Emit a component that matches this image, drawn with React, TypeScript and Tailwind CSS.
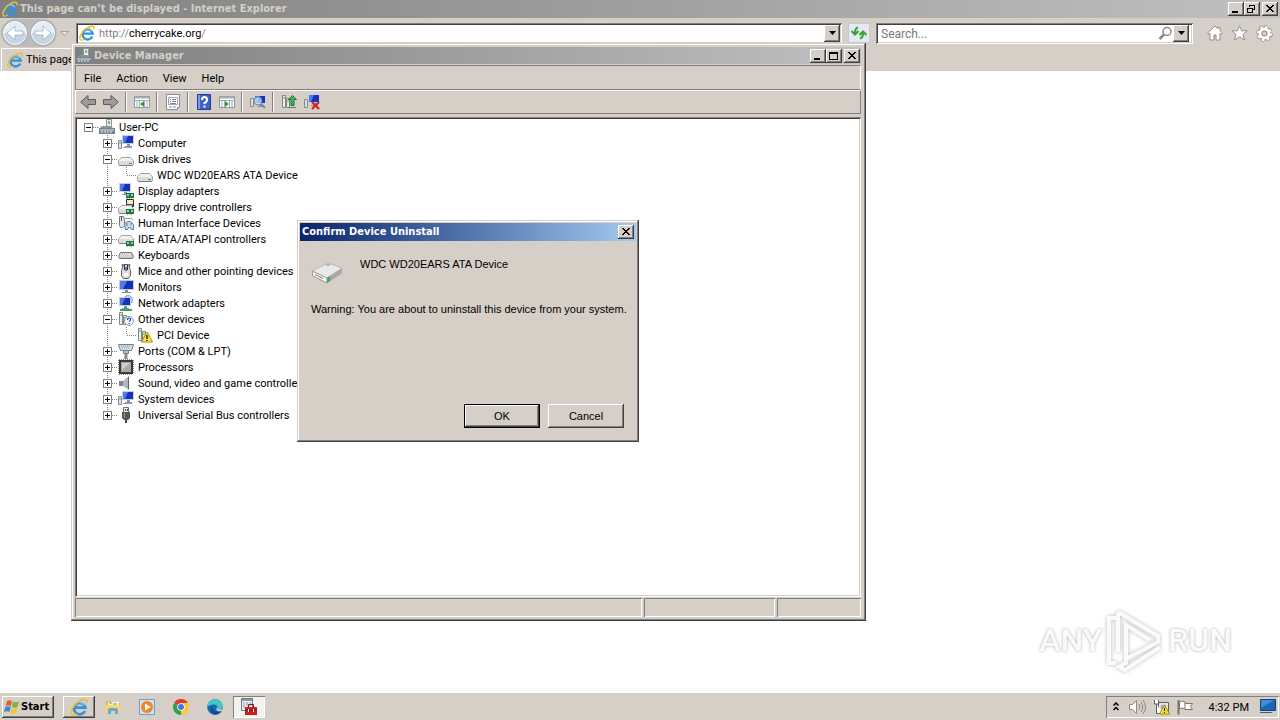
import { ReactNode, useState } from 'react';

const raised = 'bg-[#d5cfc7] shadow-[inset_-1px_-1px_#404040,inset_1px_1px_#ffffff,inset_-2px_-2px_#808080]';
const windowFrame = 'bg-[#d5cfc7] shadow-[inset_-1px_-1px_#404040,inset_1px_1px_#d5cfc7,inset_-2px_-2px_#808080,inset_2px_2px_#ffffff]';
const sunken = 'bg-white shadow-[inset_1px_1px_#808080,inset_-1px_-1px_#ffffff,inset_2px_2px_#404040,inset_-2px_-2px_#d5cfc7]';
const thinSunken = 'shadow-[inset_1px_1px_#808080,inset_-1px_-1px_#ffffff]';
const captionFont = "font-['DejaVu_Sans_Condensed','Open_Sans',sans-serif] text-[11px] font-bold whitespace-nowrap";

type IconName =
  | 'pc' | 'computer' | 'disk' | 'display' | 'floppy' | 'hid' | 'ide' | 'keyboard' | 'mouse'
  | 'monitor' | 'network' | 'other' | 'pci' | 'port' | 'cpu' | 'sound' | 'usb';

const Screen = ({ x = 3, y = 1 }: { x?: number; y?: number }) => (
  <g transform={`translate(${x} ${y})`}>
    <rect x="0" y="0" width="12" height="9" fill="#c9cfe0" />
    <rect x="1" y="1" width="10" height="7" fill="#1632b8" />
    <path d="M1 1h5l-3 7H1z" fill="#4c7be8" />
    <path d="M5 9h3v2h2v1H3v-1h2z" fill="#8b93a6" />
  </g>
);

const Drive = ({ y = 5 }: { y?: number }) => (
  <g transform={`translate(0 ${y})`}>
    <path d="M3.500.500h9l3 3.500v3.500l-1 1H1.500l-1-1V4z" fill="#dcdcdc" stroke="#a2a2a2" />
    <path d="M3.500 1h9l2.500 3H1z" fill="#f2f2f2" />
    <path d="M1 8.500h14" stroke="#7d7d7d" />
    <path d="M11 6.500h3" stroke="#4d8a55" />
  </g>
);

const Card = ({ x = 8, y = 10 }: { x?: number; y?: number }) => (
  <g transform={`translate(${x} ${y})`}>
    <rect width="8" height="5" fill="#1c7a4c" />
    <path d="M1 1h2v2H1zM5 1h2v2H5z" fill="#8fd0a5" />
    <path d="M1 5.500h6" stroke="#c8a83e" strokeDasharray="1 1" />
  </g>
);

const Tower = () => (
  <>
    <path d="M1.500 1.500h3v12h-3z" fill="#eeeeee" stroke="#858585" />
    <path d="M5.500 4.500h3v9h-3z" fill="#dfeadf" stroke="#858585" />
    <path d="M2 4h2M6 7h2" stroke="#4cae55" />
  </>
);

const drawings: Record<IconName, ReactNode> = {
  pc: (
    <>
      <path d="M7.500.500h5v8h-5z" fill="#e4eae6" stroke="#8d9a95" />
      <path d="M9 2h2v3H9z" fill="#7cb68c" />
      <path d="M3 7h8l3 2H1z" fill="#8a9198" />
      <path d="M0 9h16v6H0z" fill="#77838f" />
      <path d="M1 10h14v2H1z" fill="#a9b3bc" />
      <path d="M2 13h12" stroke="#e8ecef" strokeDasharray="2 1" />
    </>
  ),
  computer: (
    <>
      <Screen x={4} y={0} />
      <path d="M.500 5.500h3v8h-3z" fill="#e6e6ef" stroke="#858a9a" />
      <path d="M1 8h2" stroke="#48b054" />
      <path d="M5 12h9v1H5z" fill="#9a9fab" />
    </>
  ),
  disk: <Drive y={6} />,
  display: (
    <>
      <Screen x={1} y={0} />
      <Card />
    </>
  ),
  floppy: (
    <>
      <path d="M8.500.500h7v7h-7z" fill="#4a4d52" stroke="#2f3135" />
      <path d="M9 1h6v4H9z" fill="#f3ecc2" />
      <path d="M10 6h4v2h-4z" fill="#c8c8c8" />
      <Drive y={6} />
      <Card />
    </>
  ),
  hid: (
    <>
      <path d="M1.500 1.500h4l1 3v6l-2 2h-2l-1-2z" fill="#e7e7e7" stroke="#777777" />
      <path d="M3.500 2v4" stroke="#4d4d4d" />
      <path d="M6 3.500h7l2 1" stroke="#979797" fill="none" />
      <path d="M6.500 8.500l3-2h3l3 3v5h-2l-1-2h-2l-1 2h-2z" fill="#c9dceb" stroke="#607c92" />
      <path d="M9 8v3M12 9h2" stroke="#3b76a5" />
    </>
  ),
  ide: (
    <>
      <Drive y={4} />
      <Card />
    </>
  ),
  keyboard: (
    <>
      <path d="M2.500 5.500h11l2 4-1 2h-13l-1-2z" fill="#c9c9c9" stroke="#777777" />
      <path d="M3 7h10M2 9h12" stroke="#ffffff" strokeDasharray="1 1" />
    </>
  ),
  mouse: (
    <>
      <path d="M4 1l1 4M12 1l-1 4" stroke="#555555" />
      <path d="M5.500 1.500h5l2 6v5l-2 3h-5l-2-3v-5z" fill="#dedede" stroke="#5e5e5e" />
      <path d="M6 2h1v5H6zM9 2h1v5H9z" fill="#303030" />
      <path d="M7 4h2v4H7z" fill="#5c83ad" />
      <path d="M6 10h4v3H6z" fill="#ffffff" />
    </>
  ),
  monitor: (
    <g transform="translate(1 1)">
      <rect width="15" height="10" fill="#bcc9df" />
      <rect x="1" y="1" width="13" height="8" fill="#1531b2" />
      <path d="M1 1h7L4 9H1z" fill="#4d7ce9" />
      <path d="M6 10h3v2h3v1H3v-1h3z" fill="#888e9d" />
    </g>
  ),
  network: (
    <>
      <circle cx="10" cy="5" r="4.500" fill="#b8ddf7" stroke="#6ca3cb" />
      <Screen x={1} y={2} />
      <path d="M7 12h2v2h5v2H2v-2h5z" fill="#31a667" />
    </>
  ),
  other: (
    <>
      <Tower />
      <circle cx="11" cy="10" r="4.500" fill="#f4f8ff" stroke="#8899b4" />
      <path d="M9.500 9q0-2 1.500-2t1.500 1.500T11 10.500M11 12v1" stroke="#1c46ac" strokeWidth="1.200" fill="none" />
    </>
  ),
  pci: (
    <>
      <Tower />
      <path d="M9.500 5.500h1l5 9.500h-11z" fill="#ffe62e" stroke="#a48a16" />
      <path d="M10 8v4M10 13v1" stroke="#222222" strokeWidth="1.500" />
    </>
  ),
  port: (
    <>
      <path d="M.500 1.500h15l-2 6h-11z" fill="#d9dfe3" stroke="#77818a" />
      <path d="M3 3h10M4 5h8" stroke="#6c91ad" strokeDasharray="1 1" />
      <path d="M5.500 7.500h5v3h-5z" fill="#b6bcc2" stroke="#7b8389" />
      <path d="M8 11v5" stroke="#83898e" strokeWidth="3" />
    </>
  ),
  cpu: (
    <>
      <path d="M1 1h14v14H1z" fill="#3a3a36" />
      <path d="M1 .500h14M1 15.500h14M.500 1v14M15.500 1v14" stroke="#8c8a78" strokeDasharray="1 1" />
      <path d="M3 3h10v10H3z" fill="#a9a9a9" />
      <path d="M4 4h8l-8 7z" fill="#cfcfcf" />
    </>
  ),
  sound: (
    <>
      <path d="M1 6h5v5H1z" fill="#7c848d" />
      <path d="M5 6l6-5v14l-6-4z" fill="#aeb5bc" />
      <path d="M10.500 2v12" stroke="#58616a" />
    </>
  ),
  usb: (
    <>
      <path d="M5.500.500h5v5h-5z" fill="#ededed" stroke="#6f6f6f" />
      <path d="M7 2h1v2H7zM9 2h1v2H9z" fill="#444444" />
      <path d="M4 5h8v6l-2 2H6l-2-2z" fill="#555555" />
      <path d="M6 6h1v5H6z" fill="#9b9b9b" />
      <path d="M8 13v3" stroke="#444444" strokeWidth="2" />
    </>
  ),
};

interface TreeNode {
  label: string;
  icon: IconName;
  level: number;
  state?: 'open' | 'closed';
  last?: boolean;
}

const nodes: TreeNode[] = [
  { label: 'User-PC', icon: 'pc', level: 0, state: 'open' },
  { label: 'Computer', icon: 'computer', level: 1, state: 'closed' },
  { label: 'Disk drives', icon: 'disk', level: 1, state: 'open' },
  { label: 'WDC WD20EARS ATA Device', icon: 'disk', level: 2 },
  { label: 'Display adapters', icon: 'display', level: 1, state: 'closed' },
  { label: 'Floppy drive controllers', icon: 'floppy', level: 1, state: 'closed' },
  { label: 'Human Interface Devices', icon: 'hid', level: 1, state: 'closed' },
  { label: 'IDE ATA/ATAPI controllers', icon: 'ide', level: 1, state: 'closed' },
  { label: 'Keyboards', icon: 'keyboard', level: 1, state: 'closed' },
  { label: 'Mice and other pointing devices', icon: 'mouse', level: 1, state: 'closed' },
  { label: 'Monitors', icon: 'monitor', level: 1, state: 'closed' },
  { label: 'Network adapters', icon: 'network', level: 1, state: 'closed' },
  { label: 'Other devices', icon: 'other', level: 1, state: 'open' },
  { label: 'PCI Device', icon: 'pci', level: 2 },
  { label: 'Ports (COM & LPT)', icon: 'port', level: 1, state: 'closed' },
  { label: 'Processors', icon: 'cpu', level: 1, state: 'closed' },
  { label: 'Sound, video and game controllers', icon: 'sound', level: 1, state: 'closed' },
  { label: 'System devices', icon: 'computer', level: 1, state: 'closed' },
  { label: 'Universal Serial Bus controllers', icon: 'usb', level: 1, state: 'closed', last: true },
];

// dotted connectors and the plus/minus box in front of a row
const Branch = ({ node }: { node: TreeNode }) => {
  const x = node.level * 19 + 9.5;
  const width = (node.level + 1) * 19;
  return (
    <svg width={width} height="16" className="shrink-0" fill="none" stroke="#808080" shapeRendering="crispEdges">
      {node.level === 2 && <path d="M28.500 0V16" strokeDasharray="1 1" />}
      {node.level > 0 && <path d={`M${x} 0V${node.last || node.level === 2 ? 8 : 16}`} strokeDasharray="1 1" />}
      <path d={`M${x} 8.500H${width}`} strokeDasharray="1 1" />
      {node.state && (
        <>
          <rect x={x - 4} y="4.500" width="8" height="8" fill="#ffffff" />
          <path d={`M${x - 2.5} 8.500h5`} stroke="#000000" />
          {node.state === 'closed' && <path d={`M${x} 6v5`} stroke="#000000" />}
        </>
      )}
    </svg>
  );
};

const IeLogo = ({ size = 16 }: { size?: number }) => (
  <svg width={size} height={size} viewBox="0 0 16 16" fill="none" className="shrink-0">
    <path d="M13.300 11.500A5.100 5.100 0 1 1 13.700 8.600H4.500" stroke="#2f93dd" strokeWidth="2.400" />
    <path d="M12.800 6.200A5.200 5.200 0 0 0 4 6" stroke="#8fd3fa" strokeWidth="1.200" />
    <path d="M15 4.500C16 .500 12 .300 8 3 3.500 6 .200 11 1 14c.700 2 3.300 1 5 0" stroke="#f2bd1d" strokeWidth="1.400" />
  </svg>
);

const CaptionButton = ({ kind }: { kind: 'minimize' | 'maximize' | 'restore' | 'close' }) => (
  <button aria-label={kind} className={`flex h-[14px] w-4 shrink-0 items-center justify-center ${raised} ${kind === 'close' ? 'ml-[2px]' : ''}`}>
    <svg width="12" height="10" stroke="#000000" fill="none" shapeRendering="crispEdges">
      {kind === 'minimize' && <path d="M2 8h6" strokeWidth="2" />}
      {kind === 'maximize' && <path d="M1.500 1v7.500h8V1M1 1.500h9M1 2.500h9" />}
      {kind === 'restore' && <path d="M3.500 3V1.500h5v4H7M3 1h6M1.500 4.500h5v4h-5zM1 4h6" />}
      {kind === 'close' && <path d="M2 1l7 7M3 1l7 7M9 1L2 8M10 1L3 8" shapeRendering="auto" />}
    </svg>
  </button>
);

const DropButton = ({ label }: { label: string }) => (
  <button aria-label={label} className={`flex h-[17px] w-4 items-center justify-center ${raised}`}>
    <svg width="7" height="4"><path d="M0 0h7L3.500 4z" /></svg>
  </button>
);

const RoundArrow = ({ flip }: { flip?: boolean }) => (
  <button aria-label={flip ? 'Forward' : 'Back'}>
    <svg width="28" height="28" viewBox="0 0 28 28">
      <circle cx="14" cy="14" r="13" fill="#a9adb2" />
      <circle cx="14" cy="14" r="11.500" fill="#e3edf6" stroke="#ffffff" />
      <path d="M3 14a11 11 0 0 0 22 0z" fill="#c7d6e4" />
      <path
        d={flip ? 'M6 12h8V7l8 7-8 7v-5H6z' : 'M22 12h-8V7l-8 7 8 7v-5h8z'}
        fill="#ffffff"
        stroke="#9ab0c4"
        strokeWidth=".8"
      />
    </svg>
  </button>
);

const Browser = () => {
  const [host, setHost] = useState('cherrycake.org');
  return (
    <>
      <header className="flex h-[18px] items-center bg-linear-to-r from-[#808080] to-[#c0c0c0] pr-[2px] pl-[2px]">
        <IeLogo />
        <h1 className={`ml-[2px] flex-1 pt-px text-[#d5cfc7] ${captionFont}`}>This page can’t be displayed - Internet Explorer</h1>
        <CaptionButton kind="minimize" />
        <CaptionButton kind="restore" />
        <CaptionButton kind="close" />
      </header>
      <nav className="flex h-[30px] items-center bg-[#d5cfc7] pr-[7px] pl-px">
        <div className="mr-[3px] flex items-center rounded-full bg-[#bcbcbc]">
          <RoundArrow />
          <RoundArrow flip />
        </div>
        <svg width="9" height="5" className="mr-[7px]"><path d="M.500.500h8l-4 4z" fill="#e6e3dc" stroke="#a5a199" /></svg>
        <div className={`flex h-[21px] flex-[761] items-center pr-[2px] pl-[3px] text-[11px] ${sunken}`}>
          <IeLogo />
          <label htmlFor="address" className="ml-1 pt-[2px] text-[#808080]">http://</label>
          <input id="address" value={host} onChange={e => setHost(e.target.value)} className="field-sizing-content pt-[2px] outline-none" />
          <span className="flex-1 pt-[2px] text-[#808080]">/</span>
          <DropButton label="Address history" />
        </div>
        <button aria-label="Refresh" className="mx-[6px] flex h-5 w-[22px] items-center justify-center border border-[#c3c8da] bg-[#e6e8f2]">
          <svg width="16" height="14" viewBox="0 0 16 14" fill="none" stroke="#37a134" strokeWidth="2">
            <path d="M7 1.500Q4 2 4 7M.500 5L4 8.500 7.500 5M9 12.500Q12 12 12 7M8.500 9L12 5.500 15.500 9" />
          </svg>
        </button>
        <div className={`flex h-[21px] flex-[308] items-center pr-1 pl-[5px] ${sunken}`}>
          <input aria-label="Search" placeholder="Search..." className="min-w-0 flex-1 pt-px text-xs outline-none placeholder:text-[#777777]" />
          <svg width="15" height="15" fill="none" stroke="#8a8a8a">
            <circle cx="9" cy="5.500" r="4" strokeWidth="1.500" />
            <path d="M6 8.500L1.500 13" strokeWidth="2.500" />
          </svg>
          <DropButton label="Search providers" />
        </div>
        <div className="ml-[14px] flex gap-2">
          <button aria-label="Home">
            <svg width="16" height="16" fill="#ffffff" stroke="#92908b">
              <path d="M8 1L.700 8l1.300 1.300 1-1V15h4v-5h2v5h4V8.300l1 1L15.300 8 13 5.700V2h-2v2z" />
            </svg>
          </button>
          <button aria-label="Favorites">
            <svg width="17" height="16" fill="#ffffff" stroke="#92908b">
              <path d="M8.500.800l2.200 5h5.500l-4.300 3.700 1.600 5.500-5-3.200-5 3.200 1.600-5.500L.800 5.800h5.500z" />
            </svg>
          </button>
          <button aria-label="Tools">
            <svg width="17" height="17" viewBox="0 0 17 17" fill="none">
              <circle cx="8.500" cy="8.500" r="7" stroke="#8e8c87" strokeWidth="2.500" strokeDasharray="3.200 2.300" />
              <circle cx="8.500" cy="8.500" r="4.500" stroke="#8e8c87" strokeWidth="5" />
              <circle cx="8.500" cy="8.500" r="6.500" stroke="#ffffff" strokeWidth="2" strokeDasharray="2.400 2.700" />
              <circle cx="8.500" cy="8.500" r="4.500" stroke="#ffffff" strokeWidth="3" />
            </svg>
          </button>
        </div>
      </nav>
      <div className="flex h-[23px] bg-[#d5cfc7] pl-px">
        <button className="flex items-center gap-[3px] border-t border-l border-white pr-1 pl-[5px] text-[11px] whitespace-nowrap">
          <IeLogo />
          <span className="pt-px">This page</span>
        </button>
      </div>
      <main className="flex flex-1 items-end justify-end bg-white pr-12 pb-5">
        <Watermark />
      </main>
    </>
  );
};

const Watermark = () => (
  <div className="flex items-center gap-1 text-[32px] leading-none font-medium text-[#fafafa] [text-shadow:0_0_3px_#aaaaaa]">
    <span>ANY</span>
    <svg width="58" height="64" viewBox="0 0 58 64" fill="none" className="drop-shadow-[0_0_2px_#bbbbbb]">
      <path d="M10 10H3v45h7M12 4v40M12 4l40 24v6L20 51V17l24 15M20 51v4l-7 4 6 3 35-23" stroke="#fafafa" strokeWidth="4" />
    </svg>
    <span>RUN</span>
  </div>
);

const ToolButton = ({ label, children }: { label: string; children: ReactNode }) => (
  <button aria-label={label} className="flex h-5 w-[23px] items-center justify-center">
    <svg width="16" height="16" viewBox="0 0 16 16" fill="none">{children}</svg>
  </button>
);

const Separator = () => <span className="mx-[3px] h-5 w-[2px] border-r border-l border-r-white border-l-[#808080]" />;

const Pane = ({ right }: { right?: boolean }) => (
  <>
    <path d="M.500 2.500h15v11H.500z" fill="#ffffff" stroke="#92979b" />
    <path d="M1 3.500h14" stroke="#a6aeb6" strokeWidth="2" />
    <path d="M1 6.500h14M5.500 7v6M10.500 7v6" stroke="#a8adb1" />
    <path d={right ? 'M6 7l4 3-4 3z' : 'M10 7l-4 3 4 3z'} fill="#2b9b2f" />
    <path d="M12 8h2M12 10h2M12 12h2M2 8h2M2 10h2M2 12h2" stroke="#7bb6d4" />
  </>
);

const DeviceManager = () => (
  <section aria-label="Device Manager" className={`absolute top-[43px] left-[71px] flex h-[578px] w-[795px] flex-col py-1 pr-[5px] pl-1 ${windowFrame}`}>
    <div className="flex h-[17px] shrink-0 items-center bg-linear-to-r from-[#808080] to-[#c0c0c0] pr-px pl-px">
      <svg width="16" height="16">{drawings.pc}</svg>
      <h2 className={`ml-[2px] flex-1 pt-px text-[#d5cfc7] ${captionFont}`}>Device Manager</h2>
      <CaptionButton kind="minimize" />
      <CaptionButton kind="maximize" />
      <CaptionButton kind="close" />
    </div>
    <div className="mt-px flex h-[25px] shrink-0 items-center gap-[15px] border border-t-[#808080] border-r-white border-b-[#808080] border-l-[#808080] pt-[3px] pl-2 text-[11px]">
      {['File', 'Action', 'View', 'Help'].map(item => (
        <button key={item}>{item}</button>
      ))}
    </div>
    <div className="flex h-[24px] shrink-0 items-center border border-t-white border-r-[#808080] border-b-[#808080] border-l-white">
      <ToolButton label="Back"><path d="M8 1.500v4h7.500v5H8v4L.700 8z" fill="#9b9b9b" stroke="#5c5c5c" /></ToolButton>
      <ToolButton label="Forward"><path d="M8 1.500v4H.500v5H8v4L15.300 8z" fill="#9b9b9b" stroke="#5c5c5c" /></ToolButton>
      <Separator />
      <ToolButton label="Show console tree"><Pane /></ToolButton>
      <Separator />
      <ToolButton label="Properties">
        <path d="M1.500.500h13v13h-2v2h-11z" fill="#ffffff" stroke="#858b90" />
        <path d="M3.500 3.500h9v7h-9z" stroke="#a3abb2" />
        <path d="M5 5.500h1M7 5.500h4M5 7.500h1M7 7.500h4M5 9.500h6M4 13h3M8 13h3" stroke="#7188a0" />
      </ToolButton>
      <Separator />
      <ToolButton label="Help">
        <path d="M1.500.500h13v15h-13z" fill="#3b62c8" stroke="#1f3d93" />
        <path d="M2 1h2v14H2z" fill="#7b9ae8" />
        <path d="M6 6q0-3 2.500-3T11 5.500 8.500 9v1M8.500 11.500v2" stroke="#ffffff" strokeWidth="2" />
      </ToolButton>
      <ToolButton label="Action pane"><Pane right /></ToolButton>
      <Separator />
      <ToolButton label="Scan for hardware changes">
        <Screen x={4} y={1} />
        <path d="M.500 4.500h3v8h-3z" fill="#e0e0e0" stroke="#888888" />
        <circle cx="8" cy="7" r="4" fill="#c6e3ff" fillOpacity=".75" stroke="#6c8ba9" />
        <path d="M11 10l4 4" stroke="#7d8791" strokeWidth="2" />
      </ToolButton>
      <Separator />
      <ToolButton label="Update driver">
        <Tower />
        <path d="M7 13.500h8" stroke="#777777" />
        <path d="M11.500 1.500l4 4H13v6h-3v-6H7.500z" fill="#45b45e" stroke="#1c7438" />
      </ToolButton>
      <ToolButton label="Uninstall">
        <Screen x={4} y={0} />
        <path d="M.500 5.500h3v8h-3z" fill="#e0e0e0" stroke="#888888" />
        <path d="M8 8l7 7M15 8l-7 7" stroke="#e01b1b" strokeWidth="2" />
      </ToolButton>
    </div>
    <ul className={`mt-[3px] flex-1 overflow-hidden py-[2px] pl-1 ${sunken}`}>
      {nodes.map((node, index) => (
        <li key={index} className="flex h-4 items-center gap-px text-[11px] whitespace-nowrap">
          <Branch node={node} />
          <svg width="16" height="16" className="shrink-0">{drawings[node.icon]}</svg>
          <span className="pt-[2px] pl-[3px]">{node.label}</span>
        </li>
      ))}
    </ul>
    <div className="mt-px flex h-[19px] shrink-0 gap-[2px]">
      <span className={`flex-1 ${thinSunken}`} />
      <span className={`w-[131px] ${thinSunken}`} />
      <span className={`w-[84px] ${thinSunken}`} />
    </div>
  </section>
);

const ConfirmDialog = () => (
  <div role="dialog" aria-label="Confirm Device Uninstall" className={`absolute top-[220px] left-[297px] flex h-[222px] w-[342px] flex-col p-[3px] ${windowFrame}`}>
    <div className="flex h-[18px] shrink-0 items-center bg-linear-to-r from-[#0a246a] to-[#a6caf0] pr-[2px] pl-[2px]">
      <h2 className={`flex-1 pt-px text-white ${captionFont}`}>Confirm Device Uninstall</h2>
      <CaptionButton kind="close" />
    </div>
    <div className="flex flex-1 flex-col pr-3 pb-[11px] pl-[11px] font-['Liberation_Sans',Arial,sans-serif] text-[11px] leading-4">
      <div className="mt-[15px] flex gap-[17px]">
        <svg width="32" height="32" viewBox="0 0 32 32">
          <path d="M1 19l10 6 5 2 15-10v-3L16 24 1 16z" fill="#8d918f" />
          <path d="M1 15L17 7l14 5-15 10z" fill="#e9eae9" stroke="#b9bab9" />
          <path d="M1 15l15 7v5L2 20z" fill="#f7f7f7" stroke="#9b9c9b" />
          <path d="M16 22l15-10v5L16 27z" fill="#a7aaa8" />
          <path d="M4 18l8 4v1l-8-4z" fill="#777777" />
          <path d="M16 22v5l3-2v-5z" fill="#4fa65b" />
          <path d="M14 9l3-1 3 1-3 1z" fill="#a5a5a5" />
        </svg>
        <p>WDC WD20EARS ATA Device</p>
      </div>
      <p className="mt-[13px] flex-1 whitespace-nowrap">Warning: You are about to uninstall this device from your system.</p>
      <div className="flex justify-end gap-2">
        <button className="h-6 w-[76px] border border-black bg-[#d5cfc7] shadow-[inset_-1px_-1px_#404040,inset_1px_1px_#ffffff,inset_-2px_-2px_#808080]">OK</button>
        <button className={`h-6 w-[76px] ${raised}`}>Cancel</button>
      </div>
    </div>
  </div>
);

const taskButton = 'flex h-[22px] w-8 items-center justify-center';

const Taskbar = () => (
  <footer className="flex h-7 items-center border-t border-white bg-[#d5cfc7] pl-[2px]">
    <button className={`flex h-[22px] w-[52px] items-center gap-px pl-[2px] ${captionFont} ${raised}`}>
      <svg width="16" height="16" viewBox="0 0 16 16" className="shrink-0">
        <path d="M3 2q2-1.500 5 0L7 7Q4 5.500 1.500 7z" fill="#e8582a" />
        <path d="M9 2.500q3 1.500 6 0L13.500 8q-3 1.500-5.500 0z" fill="#7ab83a" />
        <path d="M1.300 8q3-1.500 5.500 0l-1.500 5Q3 11.500 0 13z" fill="#3b87d6" />
        <path d="M7.700 9q3 1.500 5.500 0L12 14q-3 1.500-5.500 0z" fill="#f6c32a" />
      </svg>
      <span className="pt-[2px]">Start</span>
    </button>
    <div className="ml-[9px] flex flex-1 items-center gap-[2px]">
      <button aria-label="Internet Explorer" className={`${taskButton} ${raised}`}><IeLogo size={18} /></button>
      <button aria-label="Windows Explorer" className={taskButton}>
        <svg width="16" height="16">
          <path d="M1 2h5l1 2h8v10H1z" fill="#dcb64a" />
          <path d="M3 3h11v4H3z" fill="#f9f5df" />
          <path d="M4 4h3M8 5h4" stroke="#4eaa4e" />
          <path d="M0 6h16l-1 8H1z" fill="#f6d56c" />
          <path d="M3 15v-4q0-2 2-2h6q2 0 2 2v4h-3v-3H6v3z" fill="#62abdb" />
        </svg>
      </button>
      <button aria-label="Media Player" className={taskButton}>
        <svg width="16" height="16">
          <path d="M.500.500h15v15H.500z" fill="#cfe3f4" stroke="#6d9fc9" />
          <circle cx="8" cy="8" r="6" fill="#f1861b" />
          <path d="M6 4.500l6 3.500-6 3.500z" fill="#ffffff" />
        </svg>
      </button>
      <button aria-label="Chrome" className={taskButton}>
        <svg width="16" height="16" viewBox="0 0 16 16">
          <path d="M8 8L1.070 4A8 8 0 0 1 14.930 4z" fill="#e33b2e" />
          <path d="M8 8L1.070 4A8 8 0 0 0 8 16z" fill="#2ba24c" />
          <path d="M8 8h0L8 16A8 8 0 0 0 14.930 4H8z" fill="#fcc934" />
          <circle cx="8" cy="8" r="3.800" fill="#ffffff" />
          <circle cx="8" cy="8" r="3" fill="#3b78e7" />
        </svg>
      </button>
      <button aria-label="Edge" className={taskButton}>
        <svg width="16" height="16" viewBox="0 0 16 16">
          <circle cx="8" cy="8" r="7.800" fill="#1767b8" />
          <path d="M.300 7Q1.500.300 8 .200q7 .300 7.800 6.300c.200 3-2.300 4.500-5 4-1-.300-1.300-1-.500-2C11 6 8 5 5.500 5.500S1 8 .300 7z" fill="#43c8c0" />
          <path d="M5.500 8q0 4.500 5 5 2 .200 4-1-2.500 3.800-6.500 3.800-4.500-1-4.500-5Q3.500 8 5.500 8z" fill="#0f4b91" />
          <path d="M10 8c-1 2 1.500 3 5.500 2l-1 2q-7 1-4.500-4z" fill="#d5cfc7" />
        </svg>
      </button>
      <button aria-label="Device Manager" className={`${taskButton} bg-[#f4f2ef] ${thinSunken}`}>
        <svg width="18" height="18">
          <path d="M1.500.500h11v12h-11z" fill="#eef0f2" stroke="#6f7880" />
          <path d="M2 2h10" stroke="#8b98a5" strokeWidth="2" />
          <path d="M3 5h8M3 7h8M3 9h3" stroke="#8796a3" strokeDasharray="2 1" />
          <path d="M8.500 9V6.500h5V9" stroke="#7c1414" fill="none" />
          <path d="M5 9h12v8H5z" fill="#c62222" />
          <path d="M5 12h12" stroke="#7c1414" />
          <path d="M8 11h1v3H8zM13 11h1v3h-1z" fill="#eeeeee" />
        </svg>
      </button>
    </div>
    <div className={`mr-px flex h-[22px] items-center pr-[3px] pl-[7px] ${thinSunken}`}>
      <button aria-label="Show hidden icons">
        <svg width="6" height="9" fill="none" stroke="#000000" strokeWidth="1.500"><path d="M.500 3.500L3 1l2.500 2.500M.500 8L3 5.500 5.500 8" /></svg>
      </button>
      <svg width="17" height="16" fill="none" stroke="#8c8984" className="ml-[10px]">
        <path d="M.500 5.500h3l4-4v13l-4-4h-3z" fill="#ffffff" />
        <path d="M10 5q2 3 0 6M12 3q3.500 5 0 10M14 1q5 7 0 14" />
      </svg>
      <svg width="17" height="16" fill="none" stroke="#5f5f5f" className="ml-[7px]">
        <path d="M5.500 3.500h10v9h-10z" fill="#d5d5d5" />
        <path d="M7 5h7v6H7z" fill="#a9b1b8" stroke="#ffffff" />
        <path d="M1.500 1v4h4V1M3.500 5v9.500h6" fill="#ffffff" />
        <path d="M11.500 6l5 9h-10z" fill="#ffe02b" stroke="#a58812" />
        <path d="M11.500 9v3M11.500 13v1" stroke="#222222" />
      </svg>
      <svg width="16" height="16" fill="#ffffff" stroke="#777570" className="ml-[7px]">
        <path d="M2.500 3q3-2 5.500 0v7q-3-2-5.500 0zM8 4.500h7.500l-2 3 2 3H8" />
        <path d="M1.500 1v14.500" strokeWidth="2" />
      </svg>
      <time className="mr-[11px] ml-4 pt-[3px] text-[11px]">4:32 PM</time>
      <svg width="16" height="15">
        <path d="M.500.500h15v11H.500z" fill="#1c64b4" stroke="#174070" />
        <path d="M1 1h13L1 9z" fill="#3c8fdc" />
        <path d="M0 13h11l2 1H0z" fill="#4a5b70" />
      </svg>
    </div>
  </footer>
);

export default function App() {
  return (
    <div className="relative flex h-screen flex-col overflow-hidden bg-white font-['Roboto',sans-serif] text-black">
      <Browser />
      <DeviceManager />
      <ConfirmDialog />
      <Taskbar />
    </div>
  );
}
